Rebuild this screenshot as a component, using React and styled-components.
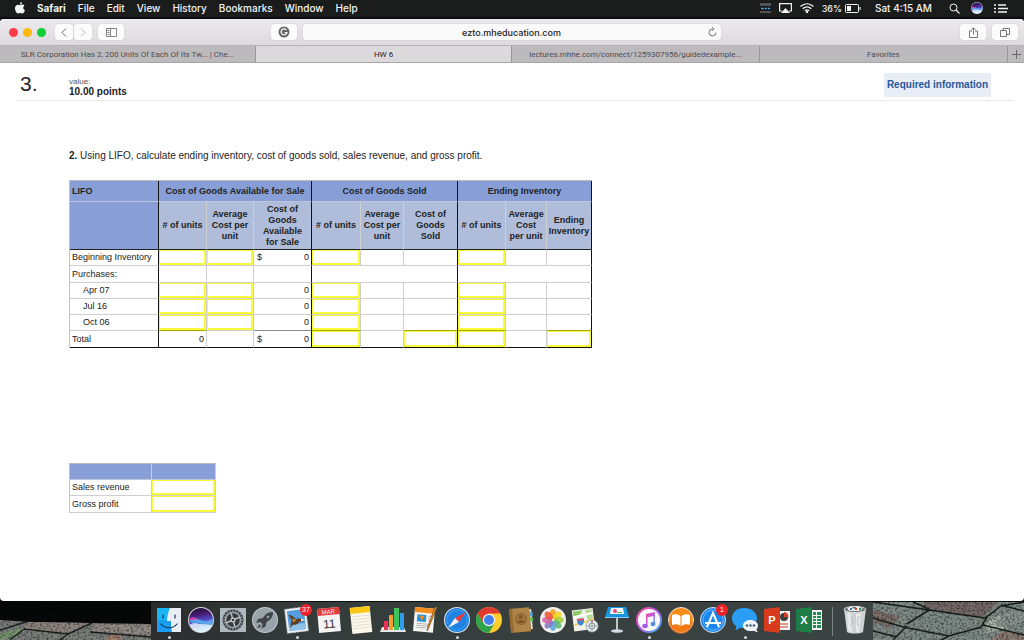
import React from 'react';
import styled, { createGlobalStyle, css } from 'styled-components';

const GlobalStyle = createGlobalStyle`
  * {
    box-sizing: border-box;
  }

  body {
    margin: 0;
    background: #111313;
    font-family: 'Liberation Sans', Arial, sans-serif;
    color: #222;
  }

  button, input {
    margin: 0;
    padding: 0;
    border: 0;
    background: none;
    font: inherit;
    color: inherit;
  }

  svg {
    display: block;
  }
`;

const Screen = styled.div`
  display: flex;
  flex-direction: column;
  min-height: 100vh;
`;

// Menu bar
const MenuBar = styled.header`
  display: flex;
  justify-content: space-between;
  align-items: center;
  height: 19px;
  padding: 0 16px 3px 15px;
  background: linear-gradient(#1a1c1b 0, #1b1d1c 16px, #0a0c0b 18px);
  color: #f4f4f4;
  font: 500 10px Inter, sans-serif;
`;

const MenuGroup = styled.nav`
  display: flex;
  align-items: center;
  gap: 12px;
`;

const StatusGroup = styled.div`
  display: flex;
  align-items: center;
  gap: ${(props) => props.$gap}px;
`;

const MenuItem = styled.button`
  font-weight: ${(props) => (props.$bold ? 700 : 500)};
  white-space: nowrap;
`;

const Battery = styled.span`
  display: flex;
  align-items: center;
  gap: 3px;
  font-size: 9px;
`;

const Clock = styled.span`
  margin: 0 6px 0 3px;
`;

// Browser window
const BrowserWindow = styled.div`
  flex: 1;
  display: flex;
  flex-direction: column;
  border-radius: 4px;
  overflow: hidden;
  background: #fff;
`;

const Toolbar = styled.div`
  display: grid;
  grid-template-columns: 262fr 450fr 297fr;
  align-items: center;
  height: 26px;
  padding: 0 6px 0 9px;
  background: linear-gradient(#edeaed, #dcdadc);
`;

const ToolGroup = styled.div`
  display: flex;
  align-items: center;
  justify-content: ${(props) => (props.$end ? 'flex-end' : 'flex-start')};
  gap: 6px;
`;

const Lights = styled.div`
  display: flex;
  gap: 5px;
  margin-right: 3px;
`;

const Light = styled.button`
  width: 9px;
  height: 9px;
  border-radius: 50%;
  background: ${(props) => props.$color};
`;

const Joined = styled.div`
  display: flex;
  gap: 1px;
`;

const ToolButton = styled.button`
  display: flex;
  align-items: center;
  justify-content: center;
  width: ${(props) => (props.$narrow ? 18 : 26)}px;
  height: 16px;
  border-radius: 3px;
  background: #fcfbfc;
  box-shadow: 0 0 1px #a9a7a9;
  color: #666;
`;

const AddressBar = styled.div`
  flex: 1;
  display: flex;
  align-items: center;
  height: 16px;
  padding: 0 4px 0 12px;
  border-radius: 3px;
  background: #fbfafb;
  box-shadow: 0 0 1px #a9a7a9;
  color: #666;
`;

const AddressInput = styled.input`
  flex: 1;
  min-width: 0;
  text-align: center;
  font: 500 9px Inter, sans-serif;
  color: #222;
  outline: none;
`;

const Tabs = styled.div`
  display: flex;
  height: 18px;
  border-top: 1px solid #b5b2b5;
  border-bottom: 1px solid #a7a5a7;
  background: #bdbabd;
`;

const Tab = styled.button`
  flex: ${(props) => props.$grow} 1 0;
  min-width: 0;
  padding: 0 8px;
  overflow: hidden;
  white-space: nowrap;
  text-overflow: ellipsis;
  border-right: 1px solid #979597;
  background: ${(props) => (props.$active ? '#dbd9dc' : 'none')};
  color: ${(props) => (props.$active ? '#222' : '#4e4c4e')};
  font: 400 8px Roboto, sans-serif;
`;

const NewTab = styled.button`
  display: flex;
  align-items: center;
  justify-content: center;
  width: 16px;
  color: #666;
`;

// Page
const QuestionHeader = styled.div`
  display: flex;
  align-items: flex-start;
  height: 38px;
  margin: 0 11px 0 16px;
  border-bottom: 1px solid #e8e8e8;
`;

const QuestionNumber = styled.div`
  width: 53px;
  padding: 9px 0 0 4px;
  font-size: 21px;
  line-height: 24px;
`;

const Points = styled.div`
  flex: 1;
  padding-top: 14px;
  font-size: 8px;
  line-height: 10px;
  color: #555;

  strong {
    display: block;
    font-size: 10px;
    color: #222;
  }
`;

const RequiredLink = styled.a`
  margin: 10px 22px 0 0;
  padding: 0 3px;
  line-height: 24px;
  border-radius: 2px;
  background: #e8edf6;
  color: #27599b;
  font-size: 10px;
  font-weight: bold;
  text-decoration: none;
`;

const Question = styled.main`
  flex: 1;
  padding: 48px 0 86px 69px;
`;

const Prompt = styled.p`
  margin: 0 0 17px;
  font-size: 10px;
  line-height: 14px;
`;

const Sheet = styled.table`
  width: ${(props) => props.$width}px;
  table-layout: fixed;
  border-collapse: separate;
  border-spacing: 0;
  border-top: 1px solid #b5b9c4;
  border-left: 1px solid #c3c3c3;
  font-size: 9px;
  line-height: 11px;

  & + & {
    margin-top: 115px;
  }
`;

const edge = css`
  border-right: 1px solid ${(props) => (props.$end ? '#111' : '#cfcfcf')};
`;

const Head = styled.th`
  height: ${(props) => props.$height || 21}px;
  padding: ${(props) => (props.$left ? '0 2px' : '0')};
  text-align: ${(props) => (props.$left ? 'left' : 'center')};
  border-bottom: 1px solid #bcc6da;
  background: #879fd6;
  ${edge}
`;

const SubHead = styled.th`
  height: 48px;
  padding: 0 ${(props) => (props.$inset ? 6 : 0)}px;
  border-bottom: 1px solid #222;
  background: ${(props) => (props.$blank ? '#879fd6' : '#afbdda')};
  ${edge}
`;

const bottoms = { line: '#cfcfcf', sum: '#8a8a8a', olive: '#a8a800', last: '#111' };

const RowLabel = styled.th`
  height: ${(props) => (props.$tall ? 17 : 16)}px;
  padding: 0 0 0 ${(props) => (props.$indent ? 13 : 2)}px;
  text-align: left;
  font-weight: normal;
  white-space: nowrap;
  border-bottom: 1px solid ${(props) => bottoms[props.$bottom || 'line']};
  ${edge}
`;

const Cell = styled.td`
  padding: 0;
  border-bottom: 1px solid ${(props) => bottoms[props.$bottom || 'line']};
  ${edge}
`;

const Amount = styled.div`
  display: flex;
  justify-content: space-between;
  padding: 0 2px 0 3px;
`;

const Entry = styled.input`
  display: block;
  width: 100%;
  height: ${(props) => (props.$tall ? 16 : 15)}px;
  padding: 0 2px;
  border: solid #fafa3c;
  border-width: 1px 2px 2px 1px;
  text-align: right;
  outline: none;
`;

// Dock
const DockRow = styled.footer`
  display: flex;
  height: 39px;
  background: #0c0e0d;
`;

const Wallpaper = styled.svg`
  flex: 1;
  min-width: 0;
  height: 39px;
`;

const Dock = styled.div`
  display: flex;
  padding: 0 2px;
  border-top: 1px solid #0b0d0d;
  background: linear-gradient(90deg, #2b2c2d, #343b3b 20%, #3c4444);
`;

const DockItem = styled.button`
  position: relative;
  display: flex;
  flex-direction: column;
  align-items: center;
  justify-content: flex-start;
  width: 32px;
  padding-top: 5px;

  svg {
    width: 26px;
    height: 26px;
    overflow: visible;
  }
`;

const Running = styled.span`
  width: 3px;
  height: 3px;
  margin-top: 3px;
  border-radius: 50%;
  background: #d6dada;
`;

const Badge = styled.span`
  position: absolute;
  top: 2px;
  right: 1px;
  width: 12px;
  height: 12px;
  border-radius: 50%;
  background: #ee2128;
  color: #fff;
  font: 7px/12px 'Liberation Sans', sans-serif;
  text-align: center;
`;

const Divider = styled.div`
  width: 1px;
  margin: 5px 6px 4px 7px;
  background: #7b8282;
`;

// y = entry box, '' = blank, 'span' = blank over three columns
const rows = [
  { label: 'Beginning Inventory', cells: ['y', 'y', '$0', 'y', '', '', 'y', '', ''] },
  { label: 'Purchases:', tall: true, cells: ['', '', '', 'span', 'span'] },
  { label: 'Apr 07', indent: true, cells: ['y', 'y', '0', 'y', '', '', 'y', '', ''] },
  { label: 'Jul 16', indent: true, cells: ['y', 'y', '0', 'y', '', '', 'y', '', ''] },
  { label: 'Oct 06', indent: true, cells: ['y', 'y', '0', 'y', '', '', 'y', '', ''],
    bottoms: ['olive', 'line', 'sum', 'olive', 'line', 'olive', 'olive', 'line', 'olive'] },
  { label: 'Total', tall: true, labelBottom: 'last', cells: ['0', '', '$0', 'y', '', 'y', 'y', '', 'y'],
    bottoms: Array(9).fill('last') },
];

const columns = [89, 48, 47, 58, 49, 43, 54, 48, 41, 45];

const subHeads = [
  '# of units', 'Average Cost per unit', 'Cost of Goods Available for Sale',
  '# of units', 'Average Cost per unit', 'Cost of Goods Sold',
  '# of units', 'Average Cost per\u00a0unit', 'Ending Inventory',
];

const CellContent = ({ kind, label, tall }) => {
  if (kind === 'y') return <Entry aria-label={label} $tall={tall} />;
  if (kind === '$0') return <Amount><span>$</span><span>0</span></Amount>;
  if (kind === '0') return <Amount><span /><span>0</span></Amount>;
  return null;
};

const LifoTable = () => (
  <Sheet $width={523}>
    <colgroup>
      {columns.map((width, i) => <col key={i} width={width} />)}
    </colgroup>
    <thead>
      <tr>
        <Head $left $end>LIFO</Head>
        <Head colSpan={3} $end>Cost of Goods Available for Sale</Head>
        <Head colSpan={3} $end>Cost of Goods Sold</Head>
        <Head colSpan={3} $end>Ending Inventory</Head>
      </tr>
      <tr>
        <SubHead $blank $end />
        {subHeads.map((text, i) => (
          <SubHead key={i} $end={i % 3 === 2} $inset={i === 2 || i === 5}>{text}</SubHead>
        ))}
      </tr>
    </thead>
    <tbody>
      {rows.map((row) => (
        <tr key={row.label}>
          <RowLabel $indent={row.indent} $tall={row.tall} $bottom={row.labelBottom} $end>{row.label}</RowLabel>
          {row.cells.map((kind, i) => (
            <Cell
              key={i}
              colSpan={kind === 'span' ? 3 : 1}
              $end={kind === 'span' || i % 3 === 2}
              $bottom={row.bottoms && row.bottoms[i]}
            >
              <CellContent kind={kind} tall={row.tall} label={`${row.label} ${subHeads[i]}`} />
            </Cell>
          ))}
        </tr>
      ))}
    </tbody>
  </Sheet>
);

const ProfitTable = () => (
  <Sheet $width={147}>
    <colgroup>
      <col width={82} />
      <col width={64} />
    </colgroup>
    <thead>
      <tr>
        <Head $height={16} />
        <Head $height={16} />
      </tr>
    </thead>
    <tbody>
      {['Sales revenue', 'Gross profit'].map((label, i) => (
        <tr key={label}>
          <RowLabel $tall={i === 1}>{label}</RowLabel>
          <Cell><Entry aria-label={label} $tall={i === 1} /></Cell>
        </tr>
      ))}
    </tbody>
  </Sheet>
);

const AppleLogo = () => (
  <svg width="10" height="12" viewBox="0 0 20 24" fill="#f4f4f4">
    <path d="M14 0c.2 2.600-2 5-4.300 5C9.400 2.600 11.600.3 14 0zM10 6.300c1.100 0 2.400-1.100 4.400-1.100 1.800 0 3.500.9 4.500 2.400-3.700 2.200-3.100 7.200.9 8.700-1 3-3 6.500-5.200 6.500-1.600 0-2.300-1-4.300-1s-2.700 1-4.200 1C3 22.800 0 17.300 0 12.500 0 7.800 3 5.300 6 5.300c1.700 0 3.100 1 4 1z" />
  </svg>
);

const SiriArt = ({ id }) => (
  <>
    <defs>
      <linearGradient id={id} x1=".3" y1="0" x2=".5" y2="1">
        <stop offset="0" stopColor="#1c1238" />
        <stop offset=".3" stopColor="#4a1d78" />
        <stop offset=".55" stopColor="#4c4fc8" />
        <stop offset="1" stopColor="#8fe0f4" />
      </linearGradient>
    </defs>
    <circle cx="13" cy="13" r="13" fill="#d5d8de" />
    <circle cx="13" cy="13" r="12" fill={`url(#${id})`} />
    <path d="M1 12c5-4 8 0 12 2s8-1 12-2c-1 6-8 6-12 4s-8 1-12-4z" fill="#e84bb4" opacity=".85" />
    <path d="M1 13c4 1 8-2 12 0s8 1 12-1c0 6-7 8-12 5s-9 1-12-4z" fill="#3fb9f5" opacity=".8" />
    <path d="M2 18c4-4 8-1 11-1s7 1 11 1a12 12 0 0 1-22 0z" fill="#fff" opacity=".7" />
  </>
);

const gearTeeth = Array.from({ length: 20 }, (_, i) => i * 18);
const petals = ['#f7a01e', '#f4d51f', '#a8ce3b', '#5bb974', '#5aa9dc', '#8a72c4', '#d667a4', '#ee5340'];

const art = {
  Finder: (
    <>
      <path d="M1 1h24v24H1z" fill="#1e9df2" />
      <path d="M1 1h13c-2 4-3 9-3 13h4c0 4 0 8 1 11H1z" fill="#19b5f7" />
      <path d="M1 13h10v1h4c0 4 0 8 1 11H1z" fill="#1a8cec" opacity=".6" />
      <path d="M14 1h11v24h-9c-1-3-1-7-1-11h-4c0-4 1-9 3-13z" fill="#e9eef4" />
      <path d="M7 8v3M19 8v3M5 17c4 5 12 5 16 0" fill="none" stroke="#16324c" strokeWidth="1.200" strokeLinecap="round" />
    </>
  ),
  Siri: <SiriArt id="dockSiri" />,
  'System Preferences': (
    <>
      <path d="M0 1h26v24H0z" fill="#aeb9bf" />
      <circle cx="13" cy="13" r="10.500" fill="#36393b" />
      {gearTeeth.map((angle) => (
        <path key={angle} d="M12.300 3h1.400v2h-1.400z" fill="#8b9092" transform={`rotate(${angle} 13 13)`} />
      ))}
      <circle cx="13" cy="13" r="7.500" fill="none" stroke="#9da2a4" strokeWidth="1.600" />
      <path d="M13 13l7-3M13 13l2 7M13 13l-7 3M13 13L11 6" stroke="#bcc0c1" strokeWidth="1.500" />
      <circle cx="13" cy="13" r="2.500" fill="#c3c7c8" />
      <circle cx="13" cy="13" r="1.200" fill="#333" />
    </>
  ),
  Launchpad: (
    <>
      <circle cx="13" cy="13" r="13" fill="#c3cbcf" />
      <circle cx="13" cy="13" r="12" fill="#98a4aa" />
      <path d="M21 5c-5 0-8 2-10 6l-5 1-2 4 4-1c1 .5 2 1.500 2.500 2.500l-1 4 4-2 1-4.500c4-2 6.500-5 6.500-10z" fill="#3f4549" />
      <path d="M7.500 17L5 21.500l4-2z" fill="#3f4549" />
      <circle cx="16" cy="10" r="1.300" fill="#98a4aa" />
    </>
  ),
  Mail: (
    <g transform="rotate(-7 13 13)">
      <path d="M2 1h21v24H2z" fill="#f0f2f4" stroke="#c8ced2" strokeDasharray="1.500 1" />
      <path d="M4 3h17v20H4z" fill="#549ddd" />
      <path d="M4 17h17v6H4z" fill="#8dc1ea" />
      <path d="M5 7c3 0 5 2 7 5 3-1 5 0 7 1l1 2-5 0c-1 2-4 3-6 2l-4 3 2-5c1-2 0-5-2-8z" fill="#5a3d22" />
      <path d="M8 11l5 2-4 2z" fill="#b98a4a" />
      <path d="M17 12l4 2-4 1z" fill="#f3efe4" />
    </g>
  ),
  Calendar: (
    <g transform="rotate(-5 13 13)">
      <path d="M2 1h22v24H2z" fill="#f4f4f4" />
      <path d="M2 1h22v7H2z" fill="#df3940" />
      <text x="13" y="7" fontSize="6" textAnchor="middle" fill="#fff">MAR</text>
      <text x="13" y="21" fontSize="12" textAnchor="middle" fill="#333">11</text>
    </g>
  ),
  Notes: (
    <g transform="rotate(-6 13 13)">
      <path d="M3 0h20v26H3z" fill="#fbf8ea" />
      <path d="M3 0h20v6H3z" fill="#fac917" />
      <path d="M4 9h18M4 12h18M4 15h18M4 18h18M4 21h18" stroke="#d9d6ca" strokeWidth=".7" />
    </g>
  ),
  Numbers: (
    <>
      <path d="M2 20h22l2 5H0z" fill="#e5e8ea" />
      <path d="M4 14h4v9H4z" fill="#eb3455" />
      <path d="M9 8h4v15H9z" fill="#fba026" />
      <path d="M14 1h5v22h-5z" fill="#3fc35b" />
      <path d="M20 6h4v17h-4z" fill="#2e9df0" />
    </>
  ),
  Pages: (
    <>
      <g transform="rotate(5 13 13)">
        <path d="M2 1h20v24H2z" fill="#f4f4f2" />
        <path d="M2 1h20v5H2z" fill="#f58c1e" />
        <path d="M5 8h9v7H5z" fill="#258fd8" />
        <path d="M7 9h5l-2 5z" fill="#f08c23" />
        <path d="M5 17h12M5 19h12M5 21h9M16 9h4M16 11h4M16 13h4" stroke="#a8a8a8" strokeWidth=".8" />
      </g>
      <path d="M25 0l-8 20-2 4 1-5 7-19z" fill="#f29a22" stroke="#6b4515" strokeWidth=".7" />
    </>
  ),
  Safari: (
    <>
      <circle cx="13" cy="13" r="13" fill="#dfe6ec" />
      <circle cx="13" cy="13" r="12" fill="#1f83e4" />
      <circle cx="13" cy="13" r="10" fill="none" stroke="#b6d8f7" strokeWidth="1" strokeDasharray=".6 1.500" />
      <path d="M22 5l-7 10-4-4z" fill="#f03b3b" />
      <path d="M4 21l7-10 4 4z" fill="#f1f1f1" />
    </>
  ),
  Chrome: (
    <>
      <circle cx="13" cy="13" r="13" fill="#fccd2b" />
      <path d="M1.700 6.500A13 13 0 0 1 24.300 6.500H13L7.400 16z" fill="#e0392e" />
      <path d="M1.700 6.500A13 13 0 0 0 13 26l5.600-9.700H7.400z" fill="#2fa24c" />
      <circle cx="13" cy="13" r="6.200" fill="#f4f4f4" />
      <circle cx="13" cy="13" r="5" fill="#4280ea" />
    </>
  ),
  Contacts: (
    <g transform="rotate(-5 13 13)">
      <path d="M22 3h2v20h-2z" fill="#e5e2d8" />
      <path d="M22 6h3v4h-3z" fill="#54a7d8" />
      <path d="M22 11h3v4h-3z" fill="#6dbb59" />
      <path d="M2 1h20v24H2z" fill="#b08446" />
      <path d="M2 1h3v24H2z" fill="#946a34" />
      <circle cx="13" cy="12" r="5.500" fill="#a1763c" stroke="#87602e" />
      <circle cx="13" cy="10" r="2" fill="#80592a" />
      <path d="M9 16c1-4 7-4 8 0z" fill="#80592a" />
    </g>
  ),
  Photos: (
    <>
      <circle cx="13" cy="13" r="13" fill="#f2f1ef" />
      {petals.map((color, i) => (
        <ellipse key={color} cx="13" cy="7" rx="3.300" ry="5" fill={color} opacity=".88" transform={`rotate(${i * 45} 13 13)`} />
      ))}
    </>
  ),
  Maps: (
    <>
      <g transform="rotate(-7 13 13)">
        <path d="M1 2h21v21H1z" fill="#f1f1e8" />
        <path d="M2 3h10l-3 4-7 1z" fill="#8bcd69" />
        <path d="M14 3h7v18h-4z" fill="#b8dc98" />
        <path d="M2 9l19-2" stroke="#fff" strokeWidth="2" />
        <path d="M2 17c6-3 12 0 19-5" fill="none" stroke="#f6c83f" strokeWidth="1.500" />
        <path d="M5 11h7v3c-1 3-2 4-3.500 4S6 17 5 14z" fill="#3e84ce" />
        <path d="M5 11h7v2H5z" fill="#e2555f" />
      </g>
      <circle cx="20" cy="19" r="6" fill="#e9edef" stroke="#a4afb4" />
      <circle cx="20" cy="19" r="3" fill="none" stroke="#829099" />
      <path d="M20 14v10M15 19h10" stroke="#829099" strokeWidth=".7" />
      <path d="M20 13l1 2h-2z" fill="#e33" />
    </>
  ),
  Keynote: (
    <>
      <path d="M4 0h18l3 10H1z" fill="#1796df" />
      <path d="M7 1h12l1 6H6z" fill="#f5f7f8" />
      <circle cx="11" cy="4" r="2" fill="#e84a7a" />
      <path d="M13 5h5v1h-5z" fill="#44b44e" />
      <path d="M1 10h24v1H1z" fill="#8bcdf2" />
      <path d="M12 11h2v12h-2z" fill="#bec6ca" />
      <ellipse cx="13" cy="24" rx="6" ry="1.700" fill="#d4dade" />
    </>
  ),
  iTunes: (
    <>
      <defs>
        <linearGradient id="tunes" x1="0" x2="1" y1="0" y2="1">
          <stop offset="0" stopColor="#f4488e" />
          <stop offset=".5" stopColor="#b95be8" />
          <stop offset="1" stopColor="#2ebaf1" />
        </linearGradient>
      </defs>
      <circle cx="13" cy="13" r="12" fill="#f9f9fb" stroke="url(#tunes)" strokeWidth="2" />
      <path d="M10 7l9-2v12h-1.500V9l-6 1.300V19H10z" fill="url(#tunes)" />
      <ellipse cx="9" cy="19" rx="2.700" ry="2.200" fill="#a45be8" />
      <ellipse cx="17" cy="17" rx="2.500" ry="2.200" fill="#5f86ee" />
    </>
  ),
  iBooks: (
    <>
      <circle cx="13" cy="13" r="12.500" fill="#f98b16" stroke="#f1e6da" />
      <path d="M1 15a12 12 0 0 0 24 0z" fill="#ee6c14" opacity=".6" />
      <path d="M12.500 9C10 7 7 7 4 8v10c3-1 6-1 8.500 1zM13.500 9C16 7 19 7 22 8v10c-3-1-6-1-8.500 1z" fill="#fff" />
    </>
  ),
  'App Store': (
    <>
      <circle cx="13" cy="13" r="12.500" fill="#1b86ef" stroke="#d9e7f3" />
      <circle cx="13" cy="13" r="10" fill="none" stroke="#8fc4f8" strokeWidth=".7" />
      <path d="M7 20l6-14 6 14M5 16h16" fill="none" stroke="#fff" strokeWidth="2" />
    </>
  ),
  Messages: (
    <>
      <path d="M12 1c8 0 13 5 13 10s-5 10-13 10c-2 0-3 0-4-.5-1 1.500-3 2.500-5 2.500 1-1 1.500-2.500 1-4C1 17 0 14 0 11 0 6 4 1 12 1z" fill="#2b9df5" />
      <path d="M18 13c5 0 8 2.500 8 5.500 0 1.500-.6 2.800-1.500 3.700 0 1 .5 2 1.500 2.800-1.500 0-3-.5-4-1.300-6 1.300-11-1.200-11-5.200 0-3 3-5.500 7-5.500z" fill="#eff4f8" />
      <circle cx="15" cy="18.500" r="1.300" fill="#47647e" />
      <circle cx="18.500" cy="18.500" r="1.300" fill="#47647e" />
      <circle cx="22" cy="18.500" r="1.300" fill="#47647e" />
    </>
  ),
  PowerPoint: (
    <>
      <path d="M14 4h12v19H14z" fill="#f3f3f3" />
      <circle cx="20" cy="10" r="4" fill="#3e3e3e" />
      <path d="M20 10V5a5 5 0 0 1 4.500 5z" fill="#d44325" />
      <path d="M16 17h8M16 20h8" stroke="#d44325" />
      <path d="M0 2l16-2v26L0 24z" fill="#d93c1c" />
      <text x="8" y="17" fontSize="11" fontWeight="700" textAnchor="middle" fill="#fff">P</text>
    </>
  ),
  Excel: (
    <>
      <path d="M14 3h12v20H14z" fill="#f1f4f1" />
      <path d="M17 5h3v3h-3zM21 5h4v3h-4zM17 9h3v2h-3zM21 9h4v2h-4zM17 12h3v2h-3zM21 12h4v2h-4zM17 15h3v2h-3zM21 15h4v2h-4zM17 18h3v3h-3zM21 18h4v3h-4z" fill="#258b55" />
      <path d="M0 2l16-2v26L0 24z" fill="#1d7d47" />
      <text x="8" y="17" fontSize="11" fontWeight="700" textAnchor="middle" fill="#fff">X</text>
    </>
  ),
  Trash: (
    <>
      <path d="M2 2h22l-3 23c-3 2-13 2-16 0z" fill="#cfd2d3" />
      <path d="M5 6h4l1 19-4-1zM14 7l5-1-2 19h-3z" fill="#e6e8e8" />
      <ellipse cx="13" cy="2.500" rx="11" ry="3" fill="#656a6c" stroke="#dfe2e3" />
      <path d="M5 2l4-3 3 3 4-3 5 3-4 2H8z" fill="#f1f1ee" />
      <path d="M8 1h2v2H8z" fill="#356db5" />
      <path d="M13 1h2v2h-2z" fill="#ba4a35" />
      <path d="M17 1h2v2h-2z" fill="#358b5c" />
      <path d="M9 10l2 4-2 5M17 9l-2 6 2 4" fill="none" stroke="#a9afb1" strokeWidth=".7" />
    </>
  ),
};

const dockApps = Object.keys(art).filter((name) => name !== 'Trash');
const running = ['Finder', 'Mail', 'Safari', 'iTunes', 'Messages'];
const badges = { Mail: '37', 'App Store': '1' };

const Grain = ({ id }) => (
  <filter id={id} x="0" y="0" width="100%" height="100%">
    <feTurbulence type="fractalNoise" baseFrequency=".45" numOctaves="3" seed="4" result="noise" />
    <feColorMatrix in="noise" type="matrix" values="0 0 0 0 0  0 0 0 0 0  0 0 0 0 0  2.400 0 0 0 -1" />
  </filter>
);

const StonesLeft = () => (
  <Wallpaper viewBox="0 0 151 39" preserveAspectRatio="none" aria-hidden="true">
    <defs><Grain id="grainLeft" /></defs>
    <path d="M0 0h151v39H0z" fill="#070909" />
    <path d="M0 19l30 2 60 1 61 1v16H0z" fill="#7b807c" />
    <path d="M28 21l62 1-22 10-44-4z" fill="#90867f" />
    <path d="M96 23l55 1v10l-60-4z" fill="#938b86" />
    <path d="M0 33l24-6-6 8-18 4z" fill="#7b9a72" />
    <path d="M105 39l8-7 12 2-6 5z" fill="#a37e72" />
    <path d="M0 29l26-8M24 28l44 5 24-11M90 31l61 5M68 33l-8 6M10 39l14-11" fill="none" stroke="#1f2522" strokeWidth="1.500" />
    <path d="M0 0h151v39H0z" filter="url(#grainLeft)" opacity=".5" />
  </Wallpaper>
);

const StonesRight = () => (
  <Wallpaper viewBox="0 0 151 39" preserveAspectRatio="none" aria-hidden="true">
    <defs><Grain id="grainRight" /></defs>
    <path d="M0 0h151v39H0z" fill="#7f8b86" />
    <path d="M50 1h74l-14 15-58-8z" fill="#756a67" />
    <path d="M0 8l26 8-8 11-18-6z" fill="#7d6f6a" />
    <path d="M118 18l33-12v14l-24 9-12-5z" fill="#8b9490" />
    <path d="M130 30l21 4v5h-34z" fill="#8b7b73" />
    <path d="M112 22l16-8-4 10 10 3-20 5z" fill="#acb3ac" />
    <path d="M0 1l56 8 56 8 16-12 23-4M0 17l30 9 46 9 32-9 6-10M56 9L34 23M76 35l-8 4M20 39l14-14M110 24l41 10M40 1l16 7M0 30l24 6M128 4l23 6" fill="none" stroke="#18201d" strokeWidth="1.500" />
    <path d="M0 0h151v39H0z" filter="url(#grainRight)" opacity=".5" />
    <path d="M0 0h151v1H0z" fill="#0b0d0d" />
  </Wallpaper>
);

const App = () => (
  <Screen>
    <GlobalStyle />
    <MenuBar>
      <MenuGroup>
        <MenuItem aria-label="Apple menu"><AppleLogo /></MenuItem>
        <MenuItem $bold>Safari</MenuItem>
        {['File', 'Edit', 'View', 'History', 'Bookmarks', 'Window', 'Help'].map((item) => (
          <MenuItem key={item}>{item}</MenuItem>
        ))}
      </MenuGroup>
      <StatusGroup $gap={11}>
        <StatusGroup $gap={8}>
          <svg width="11" height="10" viewBox="0 0 11 10">
            <path d="M0 0h11v10H0z" fill="#515456" />
            <path d="M0 3h11v5H0z" fill="#14171b" />
            <path d="M1 5.500h3M5 5.500h2M8 5.500h2" stroke="#4aa6e0" strokeWidth="1.500" />
          </svg>
          <svg width="13" height="10" viewBox="0 0 13 10">
            <path d="M3 8H.6V.6h11.800V8H10" fill="none" stroke="#f4f4f4" strokeWidth="1.200" />
            <path d="M6.500 5L11 10H2z" fill="#f4f4f4" />
          </svg>
          <svg width="14" height="10" viewBox="0 0 14 10" fill="none" stroke="#f4f4f4" strokeWidth="1.300">
            <path d="M.5 3.500c4-3.600 9-3.600 13 0M2.700 5.700c2.700-2.300 5.900-2.300 8.600 0M4.800 7.700c1.400-1.100 3-1.100 4.400 0" />
            <circle cx="7" cy="9" r=".6" fill="#f4f4f4" />
          </svg>
          <Battery>
            36%
            <svg width="16" height="9" viewBox="0 0 16 9">
              <rect x=".5" y=".5" width="13" height="8" rx="1" fill="none" stroke="#f4f4f4" />
              <path d="M2 2h4v5H2z" fill="#f4f4f4" />
              <path d="M15 3v3" stroke="#f4f4f4" />
            </svg>
          </Battery>
        </StatusGroup>
        <Clock>Sat 4:15 AM</Clock>
        <svg width="11" height="11" viewBox="0 0 11 11" fill="none" stroke="#f4f4f4">
          <circle cx="4.500" cy="4.500" r="3.500" />
          <path d="M7 7l3.500 3.500" strokeWidth="1.300" />
        </svg>
        <MenuItem aria-label="Siri">
          <svg width="12" height="12" viewBox="0 0 26 26"><SiriArt id="menuSiri" /></svg>
        </MenuItem>
        <svg width="14" height="9" viewBox="0 0 14 9" stroke="#f4f4f4" strokeWidth="1.500">
          <path d="M0 1h2M4 1h8M0 4.500h2M4 4.500h10M0 8h2M4 8h9" />
        </svg>
      </StatusGroup>
    </MenuBar>

    <BrowserWindow>
      <Toolbar>
        <ToolGroup>
          <Lights>
            <Light $color="#fc3d49" aria-label="Close" />
            <Light $color="#fdb90a" aria-label="Minimize" />
            <Light $color="#0fce37" aria-label="Zoom" />
          </Lights>
          <Joined>
            <ToolButton $narrow aria-label="Back">
              <svg width="6" height="9" viewBox="0 0 6 9" fill="none" stroke="currentColor"><path d="M5 .5l-4 4 4 4" /></svg>
            </ToolButton>
            <ToolButton $narrow aria-label="Forward">
              <svg width="6" height="9" viewBox="0 0 6 9" fill="none" stroke="#bbb"><path d="M1 .5l4 4-4 4" /></svg>
            </ToolButton>
          </Joined>
          <ToolButton aria-label="Show sidebar">
            <svg width="11" height="9" viewBox="0 0 11 9" fill="none" stroke="currentColor" strokeWidth=".8">
              <path d="M.5.5h10v8H.5zM4.500.5v8M1.500 2.500h2M1.500 4.500h2M1.500 6.500h2" />
            </svg>
          </ToolButton>
        </ToolGroup>
        <ToolGroup>
          <ToolButton aria-label="Grammar check">
            <svg width="12" height="12" viewBox="0 0 12 12">
              <circle cx="6" cy="6" r="5.500" fill="#666" />
              <path d="M8.500 4A3 3 0 1 0 9 6.500H6.500" fill="none" stroke="#fff" strokeWidth="1.200" />
            </svg>
          </ToolButton>
          <AddressBar>
            <AddressInput aria-label="Address" defaultValue="ezto.mheducation.com" />
            <button aria-label="Reload">
              <svg width="9" height="10" viewBox="0 0 9 10" fill="none" stroke="currentColor" strokeWidth=".9">
                <path d="M4.500 2A3.500 3.500 0 1 0 8 5.500M4 .2L6 2 4 4" />
              </svg>
            </button>
          </AddressBar>
        </ToolGroup>
        <ToolGroup $end>
          <ToolButton aria-label="Share">
            <svg width="9" height="11" viewBox="0 0 9 11" fill="none" stroke="currentColor" strokeWidth=".9">
              <path d="M3 4H.5v6.500h8V4H6M4.500 7.500V1M2.500 2.800l2-2 2 2" />
            </svg>
          </ToolButton>
          <ToolButton aria-label="Show all tabs">
            <svg width="10" height="9" viewBox="0 0 10 9" fill="none" stroke="currentColor" strokeWidth=".9">
              <path d="M.5 2.500h6v6h-6zM3 2.500v-2h6.500v6h-3" />
            </svg>
          </ToolButton>
        </ToolGroup>
      </Toolbar>
      <Tabs role="tablist">
        <Tab role="tab" $grow={256}>SLR Corporation Has 2, 200 Units Of Each Of Its Tw... | Che...</Tab>
        <Tab role="tab" $grow={257} $active aria-selected="true">HW 6</Tab>
        <Tab role="tab" $grow={247}>lectures.mhhe.com/connect/1259307956/guidedexample...</Tab>
        <Tab role="tab" $grow={248}>Favorites</Tab>
        <NewTab aria-label="New tab">
          <svg width="9" height="9" viewBox="0 0 9 9" stroke="currentColor"><path d="M4.500 0v9M0 4.500h9" /></svg>
        </NewTab>
      </Tabs>

      <QuestionHeader>
        <QuestionNumber>3.</QuestionNumber>
        <Points>
          value:
          <strong>10.00 points</strong>
        </Points>
        <RequiredLink href="#required">Required information</RequiredLink>
      </QuestionHeader>
      <Question>
        <Prompt>
          <b>2.</b> Using LIFO, calculate ending inventory, cost of goods sold, sales revenue, and gross profit.
        </Prompt>
        <LifoTable />
        <ProfitTable />
      </Question>
    </BrowserWindow>

    <DockRow>
      <StonesLeft />
      <Dock>
        {dockApps.map((name) => (
          <DockItem key={name} aria-label={name}>
            <svg viewBox="0 0 26 26">{art[name]}</svg>
            {running.includes(name) && <Running />}
            {badges[name] && <Badge>{badges[name]}</Badge>}
          </DockItem>
        ))}
        <Divider />
        <DockItem aria-label="Trash">
          <svg viewBox="0 0 26 26">{art.Trash}</svg>
        </DockItem>
      </Dock>
      <StonesRight />
    </DockRow>
  </Screen>
);

export default App;
